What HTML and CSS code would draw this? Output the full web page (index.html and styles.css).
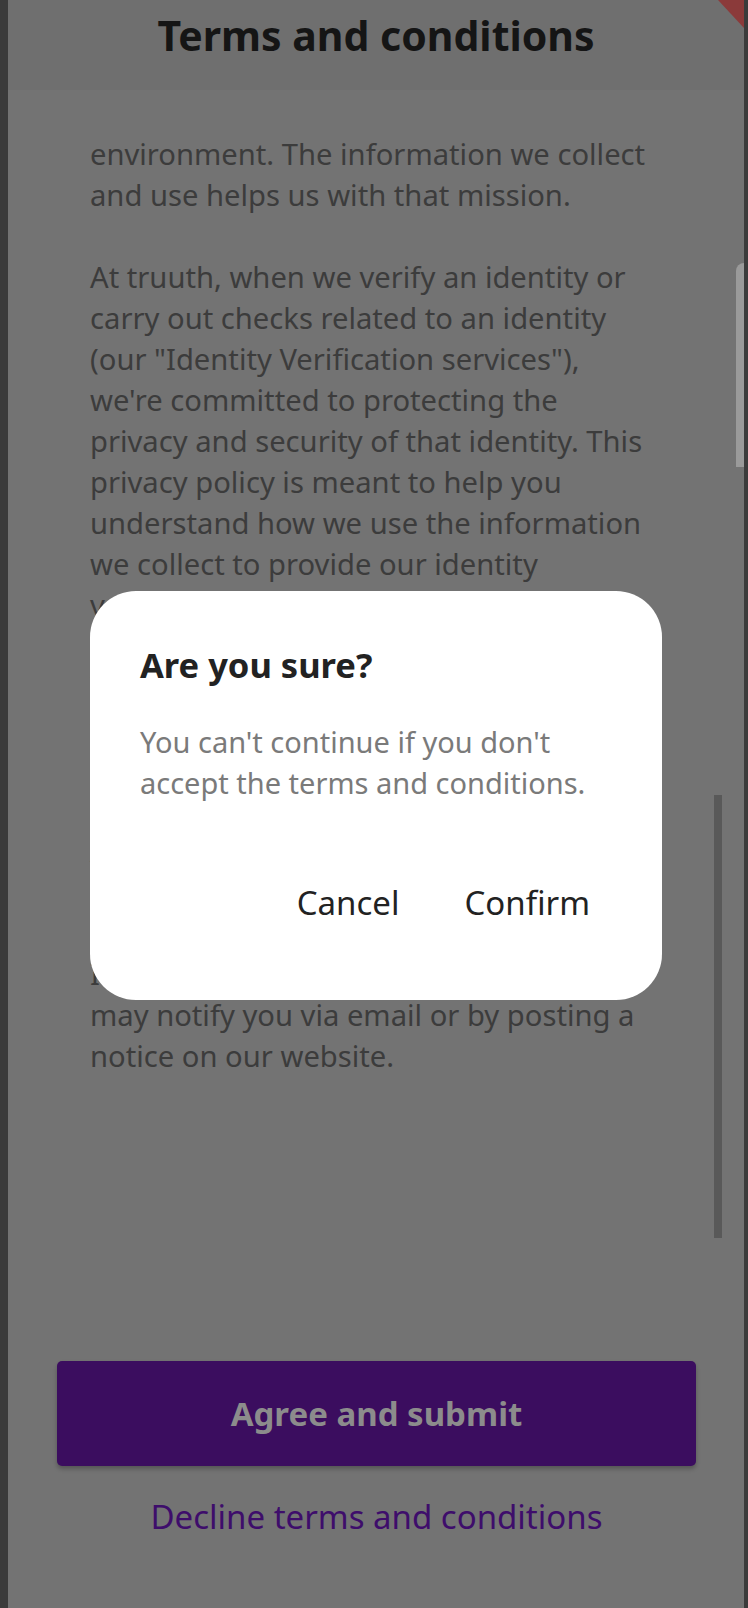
FILE: index.html
```html
<!DOCTYPE html>
<html lang="en">
<head>
<meta charset="utf-8">
<title>Terms and conditions</title>
<link rel="stylesheet" href="styles.css">
</head>
<body>
<div class="app">
  <header class="topbar">
    <h1 class="topbar-title">Terms and conditions</h1>
    <svg class="debug-banner" width="30" height="30" viewBox="0 0 30 30" aria-hidden="true"><polygon points="4,0 30,0 30,28" fill="#8b3a3a"/></svg>
  </header>

  <main class="scroll">
    <div class="policy">
      <p>environment. The information we collect and use helps us with that mission.</p>
      <p>At truuth, when we verify an identity or carry out checks related to an identity (our "Identity Verification services"), we're committed to protecting the privacy and security of that identity. This privacy policy is meant to help you understand how we use the information we collect to provide our identity verification services.</p>
      <p>We may update this policy from time<br>to time to reflect changes in our<br>practices or for legal reasons.</p>
      <p>Any updated policy will be posted here<br>and applies from the posting date.</p>
      <p>If we make changes to this policy, we<br>may notify you via email or by posting a notice on our website.</p>
    </div>
    <div class="scroll-thumb"></div>
  </main>

  <footer class="actions">
    <button class="btn-primary" type="button">Agree and submit</button>
    <a class="link-decline" href="#">Decline terms and conditions</a>
  </footer>

  <div class="edge-glow"></div>

  <div class="dialog" role="dialog" aria-modal="true">
    <h2 class="dialog-title">Are you sure?</h2>
    <p class="dialog-text">You can't continue if you don't accept the terms and conditions.</p>
    <div class="dialog-actions">
      <button class="dialog-btn" type="button">Cancel</button>
      <button class="dialog-btn" type="button">Confirm</button>
    </div>
  </div>
</div>
</body>
</html>
```

FILE: styles.css
```css
* { box-sizing: border-box; }

html, body {
  margin: 0;
  padding: 0;
}

body {
  background: #3b3b3b;
  font-family: "Noto Sans", "Open Sans", sans-serif;
  padding: 0 4px 0 8px;
}

.app {
  position: relative;
  height: 1608px;
  background: #737373;
  display: flex;
  flex-direction: column;
  overflow: hidden;
}

.topbar {
  position: relative;
  height: 90px;
  flex: 0 0 90px;
  background: #6f6f6f;
  display: flex;
  justify-content: center;
  align-items: flex-start;
}

.topbar-title {
  margin: 7px 0 0;
  font-size: 41px;
  line-height: 56px;
  font-weight: 700;
  color: #151515;
}

.debug-banner {
  position: absolute;
  top: 0;
  right: 0;
}

.scroll {
  position: relative;
  flex: 1 1 auto;
  overflow: hidden;
}

.policy {
  padding: 44px 94px 0 82px;
  font-size: 29.2px;
  line-height: 41px;
  color: #3c3c3c;
}

.policy p {
  margin: 0 0 41px;
}

.scroll-thumb {
  position: absolute;
  top: 705px;
  right: 22px;
  width: 8px;
  height: 443px;
  background: #595959;
}

.edge-glow {
  position: absolute;
  top: 263px;
  right: 0;
  width: 8px;
  height: 204px;
  background: #9a9a9a;
  border-top-left-radius: 8px;
}

.actions {
  flex: 0 0 auto;
  display: flex;
  flex-direction: column;
  align-items: stretch;
  padding: 0 48px 68px 49px;
}

.btn-primary {
  height: 105px;
  border: 0;
  border-radius: 5px;
  background: #3b0d5f;
  color: #8c8c8c;
  font-family: inherit;
  font-size: 33px;
  font-weight: 700;
  box-shadow: 0 3px 4px rgba(0, 0, 0, 0.25);
}

.link-decline {
  margin-top: 28px;
  text-align: center;
  font-size: 33px;
  line-height: 46px;
  color: #3e0d6b;
  text-decoration: none;
}

.dialog {
  position: absolute;
  top: 591px;
  left: 82px;
  width: 572px;
  height: 409px;
  background: #ffffff;
  border-radius: 46px;
  padding: 51px 60px 0 50px;
  display: flex;
  flex-direction: column;
}

.dialog-title {
  margin: 0;
  font-size: 34.5px;
  line-height: 46px;
  font-weight: 700;
  color: #222222;
}

.dialog-text {
  margin: 33px 0 0;
  font-size: 29px;
  line-height: 41px;
  color: #7a7a7a;
}

.dialog-actions {
  margin-top: 77px;
  display: flex;
  justify-content: flex-end;
  gap: 65px;
  padding-right: 12px;
}

.dialog-btn {
  border: 0;
  padding: 0;
  background: none;
  font-family: inherit;
  font-size: 33px;
  line-height: 46px;
  color: #222222;
}
```
